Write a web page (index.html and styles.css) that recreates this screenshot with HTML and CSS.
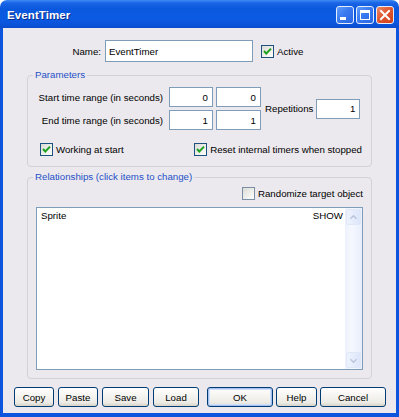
FILE: index.html
```html
<!DOCTYPE html>
<html>
<head>
<meta charset="utf-8">
<title>EventTimer</title>
<link rel="stylesheet" href="styles.css">
</head>
<body>
<div class="window">
  <div class="titlebar">
    <span class="title">EventTimer</span>
    <div class="tbtns">
      <span class="tbtn min"><span class="min-bar"></span></span>
      <span class="tbtn max"><span class="max-box"></span></span>
      <span class="tbtn close"><svg width="18" height="18" viewBox="0 0 18 18"><path d="M5 5 L13 13 M13 5 L5 13" stroke="#fff" stroke-width="2" stroke-linecap="square"/></svg></span>
    </div>
  </div>
  <div class="client">
    <div class="name-row">
      <span class="name-label">Name:</span>
      <span class="field name-field">EventTimer</span>
      <span class="check active-check"><span class="box"><svg width="11" height="11" viewBox="0 0 11 11"><path d="M2 5 L4.3 7.5 L9 2.6" fill="none" stroke="#21a121" stroke-width="2"/></svg></span>Active</span>
    </div>

    <fieldset class="group params">
      <legend>Parameters</legend>
      <div class="params-top">
        <div class="ranges">
          <div class="range-row">
            <span class="range-label">Start time range (in seconds)</span>
            <span class="field num w44">0</span>
            <span class="field num w45">0</span>
          </div>
          <div class="range-row">
            <span class="range-label">End time range (in seconds)</span>
            <span class="field num w44">1</span>
            <span class="field num w45">1</span>
          </div>
        </div>
        <div class="reps">
          <span class="reps-label">Repetitions</span>
          <span class="field num w44">1</span>
        </div>
      </div>
      <div class="check-row">
        <span class="check"><span class="box"><svg width="11" height="11" viewBox="0 0 11 11"><path d="M2 5 L4.3 7.5 L9 2.6" fill="none" stroke="#21a121" stroke-width="2"/></svg></span>Working at start</span>
        <span class="check reset-check"><span class="box"><svg width="11" height="11" viewBox="0 0 11 11"><path d="M2 5 L4.3 7.5 L9 2.6" fill="none" stroke="#21a121" stroke-width="2"/></svg></span>Reset internal timers when stopped</span>
      </div>
    </fieldset>

    <fieldset class="group rel">
      <legend>Relationships (click items to change)</legend>
      <div class="rand-row">
        <span class="check"><span class="box"></span>Randomize target object</span>
      </div>
      <div class="listbox">
        <div class="items">
          <div class="item"><span>Sprite</span><span>SHOW</span></div>
        </div>
        <div class="scrollbar">
          <span class="sb-btn"><svg width="15" height="13" viewBox="0 0 15 13"><path d="M4 8 L7.5 4.5 L11 8" fill="none" stroke="#b8c4dc" stroke-width="1.6"/></svg></span>
          <span class="sb-track"></span>
          <span class="sb-btn"><svg width="15" height="13" viewBox="0 0 15 13"><path d="M4 5 L7.5 8.5 L11 5" fill="none" stroke="#b8c4dc" stroke-width="1.6"/></svg></span>
        </div>
      </div>
    </fieldset>

    <div class="buttons">
      <div class="btn-group left">
        <span class="btn w40">Copy</span>
        <span class="btn w40">Paste</span>
        <span class="btn w47">Save</span>
        <span class="btn w46">Load</span>
      </div>
      <div class="btn-group right">
        <span class="btn w66 default">OK</span>
        <span class="btn w41">Help</span>
        <span class="btn w66">Cancel</span>
      </div>
    </div>
  </div>
</div>
</body>
</html>
```

FILE: styles.css
```css
html, body {
  margin: 0;
  padding: 0;
  background: #ffffff;
}

.window {
  width: 399px;
  height: 417px;
  display: flex;
  flex-direction: column;
  font-family: "Liberation Sans", Arial, sans-serif;
  font-size: 9.7px;
  color: #000;
}

.titlebar {
  height: 28px;
  flex: none;
  display: flex;
  align-items: center;
  justify-content: space-between;
  border-radius: 7px 7px 0 0;
  background: linear-gradient(to bottom, #3d8af5 0px, #1a64e6 3px, #0a58dd 9px, #0b5be2 18px, #0a54db 24px, #0a4ccd 28px);
  padding: 0 5px 0 7px;
}

.title {
  color: #fff;
  font-weight: bold;
  font-size: 11.5px;
  letter-spacing: 0.1px;
  text-shadow: 1px 1px 0 #0b2d8a;
  padding-top: 1px;
}

.tbtns {
  display: flex;
  gap: 2px;
  padding-top: 1px;
}

.tbtn {
  width: 18px;
  height: 18px;
  box-sizing: border-box;
  border: 1px solid #e6eefc;
  border-radius: 3px;
  position: relative;
  display: block;
}

.min, .max {
  background: linear-gradient(135deg, #5f9cf8 0%, #3a7af0 45%, #2a66e4 100%);
}

.close {
  background: linear-gradient(135deg, #ec8c6c 0%, #e0582f 45%, #cf3f1a 100%);
}

.close svg {
  position: absolute;
  left: -1px;
  top: -1px;
}

.min-bar {
  position: absolute;
  left: 3px;
  bottom: 3px;
  width: 6px;
  height: 3px;
  background: #fff;
}

.max-box {
  position: absolute;
  left: 3px;
  top: 3px;
  width: 10px;
  height: 10px;
  box-sizing: border-box;
  border: 1px solid #fff;
  border-top-width: 3px;
}

.client {
  flex: 1;
  background: #ebe9ed;
  border-style: solid;
  border-color: #0c55dc;
  border-width: 0 3px 4px 3px;
  display: flex;
  flex-direction: column;
  padding-top: 12px;
}

/* name row */
.name-row {
  display: flex;
  align-items: center;
  height: 22px;
}

.name-label {
  width: 98px;
  text-align: right;
  margin-right: 4px;
}

.field {
  background: #fff;
  border: 1px solid #7f9db9;
  box-sizing: border-box;
  display: flex;
  align-items: center;
}

.name-field {
  width: 148px;
  height: 22px;
  padding-left: 3px;
}

.check {
  display: flex;
  align-items: center;
  white-space: nowrap;
}

.box {
  width: 13px;
  height: 13px;
  box-sizing: border-box;
  border: 1px solid #1c5180;
  background: linear-gradient(135deg, #dcdcd7 0%, #f4f4f0 70%, #ffffff 100%);
  margin-right: 3px;
  display: flex;
  align-items: center;
  justify-content: center;
  flex: none;
}

.active-check {
  margin-left: 8px;
}

/* group boxes */
.group {
  margin: 0 24px;
  padding: 0;
  min-width: 0;
  border: 1px solid #d3d0d8;
  border-radius: 4px;
}

.group legend {
  margin-left: 5px;
  padding: 0 2px;
  line-height: 12px;
  color: #1f50c8;
}

.params {
  margin-top: 7px;
}

.params-top {
  display: flex;
  align-items: center;
  padding-top: 6px;
}

.ranges {
  display: flex;
  flex-direction: column;
  gap: 3px;
}

.range-row {
  display: flex;
  align-items: center;
}

.range-label {
  width: 135px;
  text-align: right;
  margin-right: 6px;
}

.num {
  height: 20px;
  justify-content: flex-end;
  padding-right: 4px;
}

.w44 { width: 44px; }
.w45 { width: 45px; margin-left: 3px; }

.reps {
  display: flex;
  align-items: center;
  margin-left: 4px;
}

.reps-label {
  margin-right: 3px;
}

.check-row {
  display: flex;
  align-items: center;
  margin-top: 13px;
  padding: 0 9px 10px 12px;
}

.reset-check {
  margin-left: auto;
}

.rel {
  margin-top: 4px;
}

.rand-row {
  display: flex;
  justify-content: flex-end;
  padding: 4px 8px 0 0;
}

.rand-row .box {
  border-color: #7a8ea6;
}

.listbox {
  margin: 7px 8px 8px 8px;
  height: 163px;
  box-sizing: border-box;
  border: 1px solid #7f9db9;
  background: #fff;
  display: flex;
}

.items {
  flex: 1;
  padding-top: 1px;
}

.item {
  display: flex;
  justify-content: space-between;
  padding: 0 2px 0 4px;
  line-height: 13px;
}

.scrollbar {
  width: 17px;
  display: flex;
  flex-direction: column;
  padding: 1px 0;
  background: linear-gradient(to right, #eef2fe 0%, #f6f8ff 40%, #e8eefc 100%);
}

.sb-btn {
  height: 14px;
  margin: 0 1px;
  border: 1px solid #e0e8f8;
  border-radius: 2px;
  background: linear-gradient(to right, #eef3fd, #dce6fb);
  display: flex;
  align-items: center;
  justify-content: center;
}

.sb-track {
  flex: 1;
}

/* bottom buttons */
.buttons {
  margin-top: 8px;
  display: flex;
  justify-content: space-between;
  padding: 0 10px 0 11px;
}

.btn-group {
  display: flex;
}

.btn-group.left { gap: 4px; }
.btn-group.right { gap: 3px; }

.btn {
  height: 20px;
  box-sizing: border-box;
  border: 1px solid #003c74;
  border-radius: 3px;
  background: linear-gradient(to bottom, #ffffff 0%, #f6f5f1 40%, #ecebe6 80%, #d8d3c8 100%);
  display: flex;
  align-items: center;
  justify-content: center;
}

.btn.default {
  box-shadow: inset 0 0 0 1px #a4c0f0, inset 0 0 0 2px #d0e0fa;
}

.w40 { width: 40px; }
.w41 { width: 41px; }
.w46 { width: 46px; }
.w47 { width: 47px; }
.w66 { width: 66px; }
```
